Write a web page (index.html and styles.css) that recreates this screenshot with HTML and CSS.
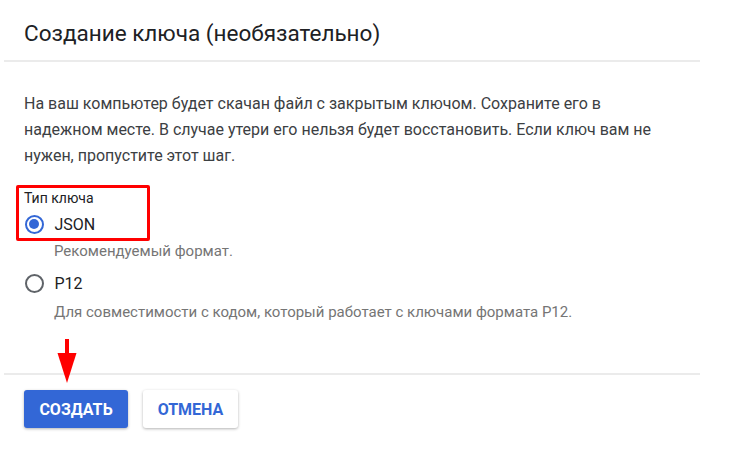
FILE: index.html
```html
<!DOCTYPE html>
<html lang="ru">
<head>
<meta charset="utf-8">
<link rel="stylesheet" href="styles.css">
</head>
<body>
<div class="panel">
  <header class="header">
    <h1 class="title">Создание ключа (необязательно)</h1>
  </header>
  <section class="content">
    <p class="desc">На ваш компьютер будет скачан файл с закрытым ключом. Сохраните его в надежном месте. В случае утери его нельзя будет восстановить. Если ключ вам не нужен, пропустите этот шаг.</p>
    <div class="field">
      <div class="highlight">
        <div class="field-label">Тип ключа</div>
        <label class="option">
          <span class="radio checked"></span>
          <span class="option-text">JSON</span>
        </label>
      </div>
      <div class="hint">Рекомендуемый формат.</div>
      <label class="option option-p12">
        <span class="radio"></span>
        <span class="option-text">P12</span>
      </label>
      <div class="hint hint-p12">Для совместимости с кодом, который работает с ключами формата P12.</div>
    </div>
  </section>
  <div class="arrow-area">
    <svg class="arrow" width="22" height="46" viewBox="0 0 22 46">
      <rect x="9" y="0" width="4" height="16" fill="#ff0000"/>
      <polygon points="1.5,14 20.5,14 11,44" fill="#ff0000"/>
    </svg>
  </div>
  <footer class="actions">
    <button class="btn primary">Создать</button>
    <button class="btn secondary">Отмена</button>
  </footer>
</div>
</body>
</html>
```

FILE: styles.css
```css
html, body {
  margin: 0;
  padding: 0;
  background: #ffffff;
}
body {
  font-family: Roboto, "Noto Sans", Arial, sans-serif;
  color: #202124;
  width: 738px;
  height: 452px;
  overflow: hidden;
}
.panel {
  margin-left: 4px;
  width: 696px;
}
.header {
  height: 62px;
  box-sizing: border-box;
  border-bottom: 2px solid #ebebeb;
  padding: 20px 20px 0 20px;
}
.title {
  margin: 0;
  font-size: 22.5px;
  line-height: 26px;
  font-weight: 400;
  color: #202124;
}
.content {
  padding: 29px 20px 0 20px;
}
.desc {
  margin: 0;
  font-size: 16px;
  line-height: 26px;
  color: #3c4043;
  max-width: 672px;
}
.field {
  margin-top: 16px;
}
.highlight {
  box-sizing: border-box;
  width: 134px;
  margin-left: -8px;
  border: 3px solid #ff0000;
  border-radius: 2px;
  padding: 2px 0 1px 5px;
}
.field-label {
  font-size: 14px;
  line-height: 16px;
  color: #202124;
}
.option {
  display: flex;
  align-items: center;
  height: 26px;
}
.highlight .option {
  margin-top: 5px;
  margin-left: -5px;
}
.radio {
  width: 19px;
  height: 19px;
  border: 2px solid #5f6368;
  border-radius: 50%;
  box-sizing: border-box;
  position: relative;
  margin-left: 0.5px;
  flex: none;
}
.highlight .radio {
  margin-left: 5.5px;
}
.radio.checked {
  border-color: #3367d6;
}
.radio.checked::after {
  content: "";
  position: absolute;
  left: 2.5px;
  top: 2.5px;
  width: 10px;
  height: 10px;
  border-radius: 50%;
  background: #3367d6;
}
.option-text {
  margin-left: 11px;
  font-size: 16px;
  color: #202124;
}
.option-p12 {
  margin-top: 9px;
}
.hint {
  margin-left: 30px;
  font-size: 15px;
  line-height: 20px;
  color: #757575;
}
.hint-p12 {
  margin-top: 6px;
}
.arrow-area {
  height: 51px;
  border-bottom: 2px solid #ebebeb;
  position: relative;
}
.arrow {
  position: absolute;
  left: 52px;
  top: 17px;
  z-index: 2;
}
.actions {
  display: flex;
  gap: 15px;
  padding: 15px 20px 0 20px;
}
.btn {
  font-family: Roboto, "Noto Sans", Arial, sans-serif;
  font-size: 16px;
  font-weight: 700;
  text-transform: uppercase;
  height: 38px;
  border-radius: 3px;
  border: none;
  padding: 0;
  cursor: pointer;
}
.primary {
  width: 104px;
  background: #3367d6;
  color: #ffffff;
  box-shadow: 0 1px 3px rgba(0,0,0,0.3);
}
.secondary {
  width: 95px;
  background: #ffffff;
  color: #3367d6;
  box-shadow: 0 1px 3px rgba(0,0,0,0.3);
}
```
